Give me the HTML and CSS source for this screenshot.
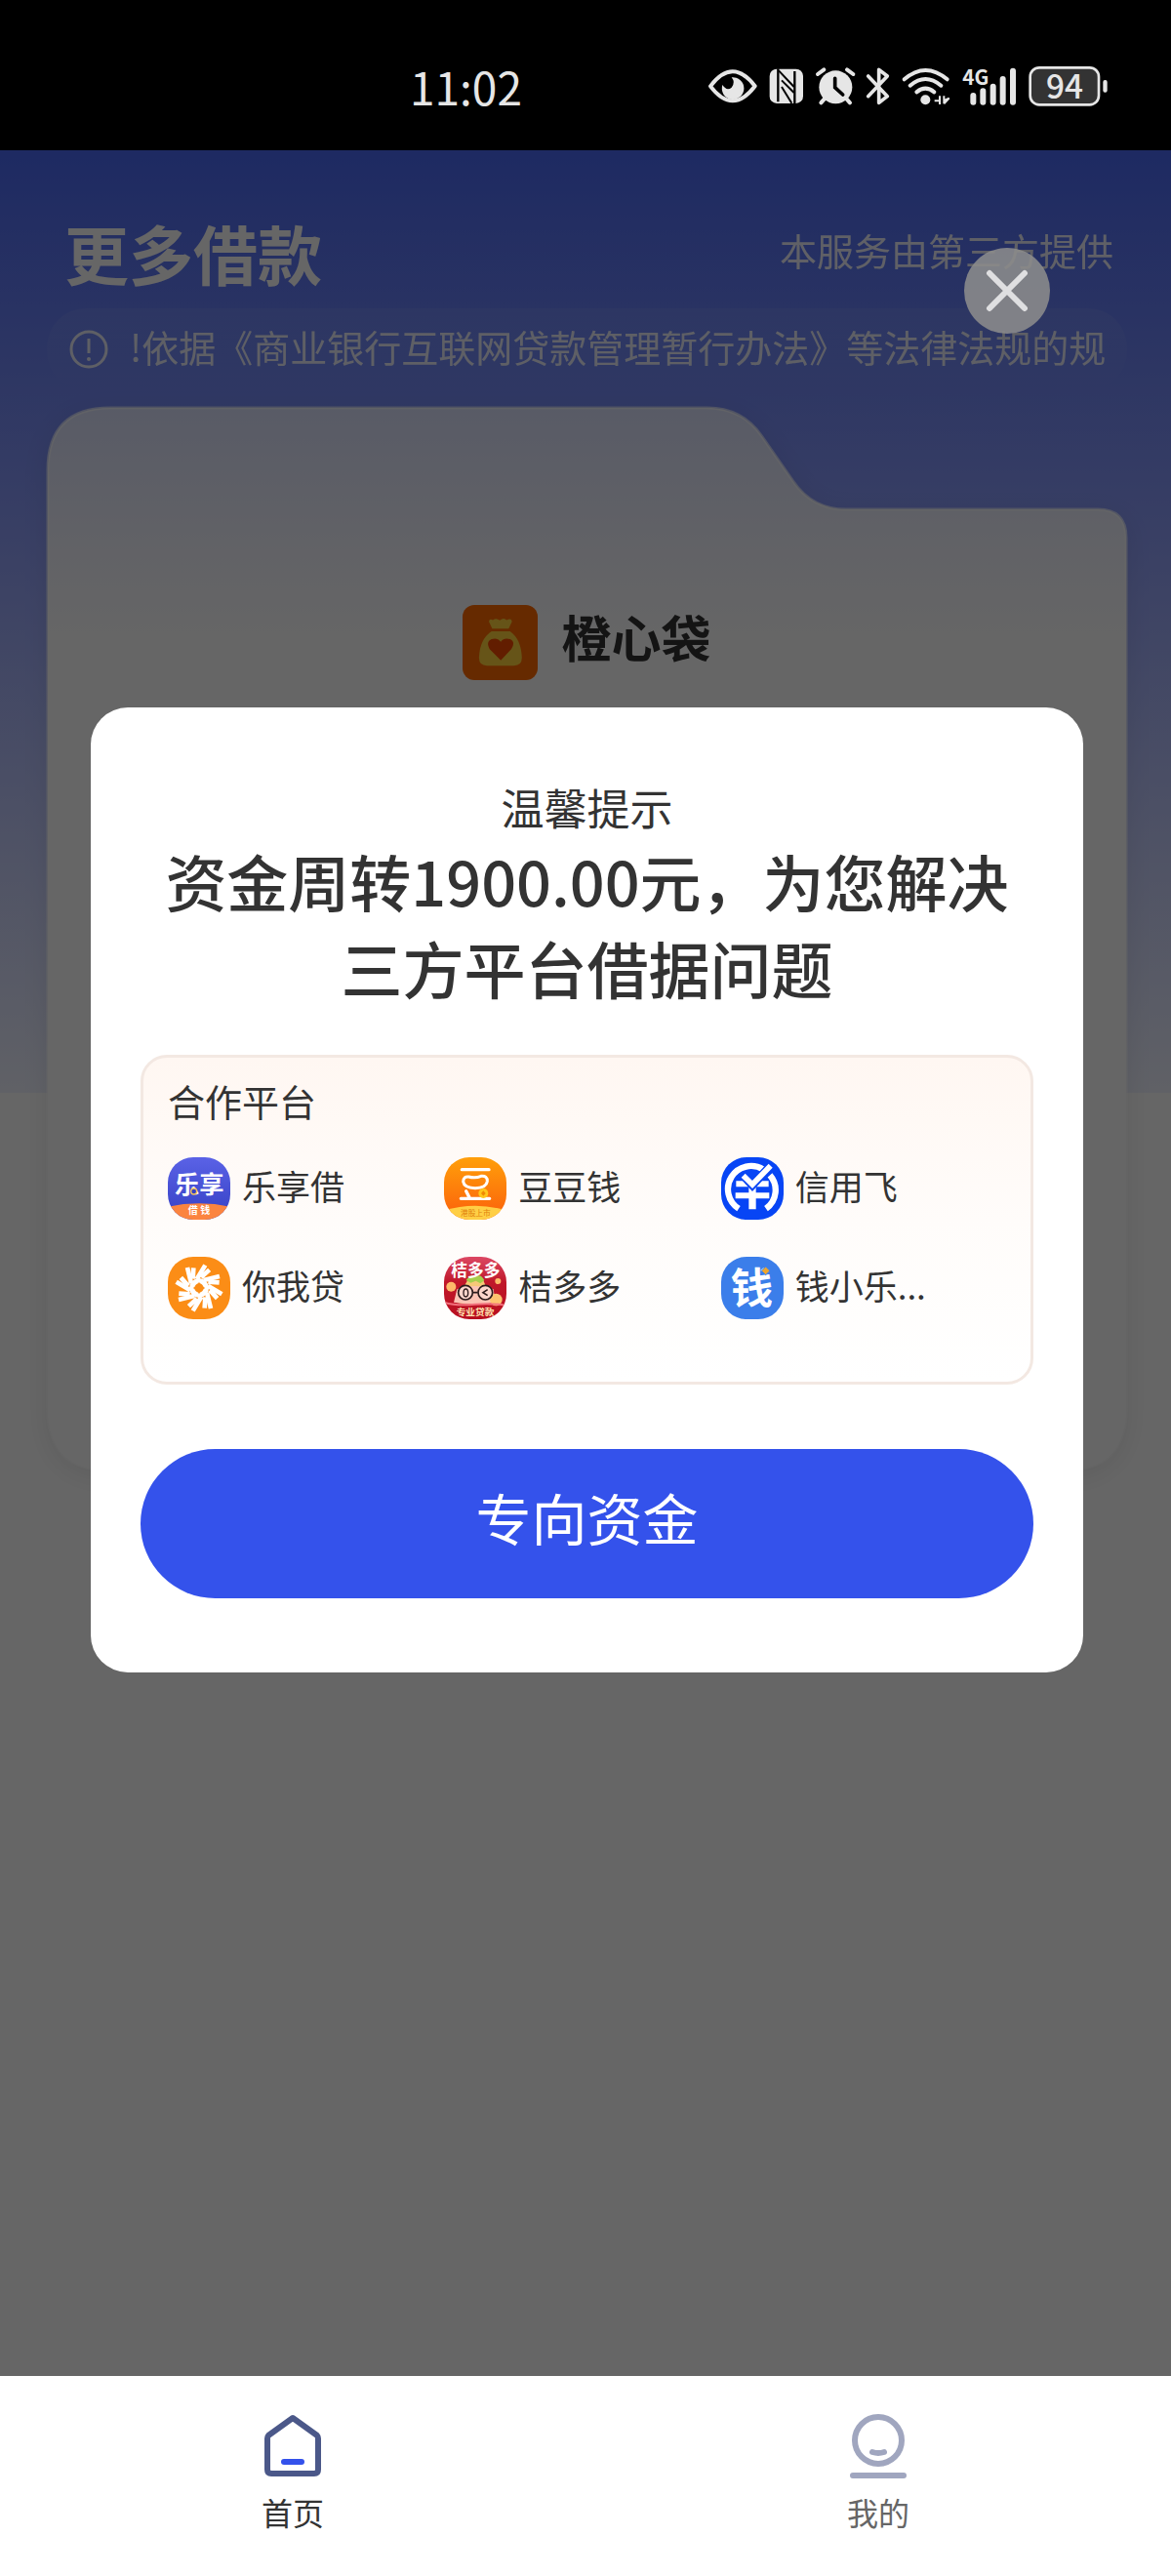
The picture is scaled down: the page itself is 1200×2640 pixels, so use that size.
FILE: index.html
```html
<!DOCTYPE html>
<html lang="zh-CN">
<head>
    <meta charset="UTF-8">
    <meta name="viewport" content="width=device-width, initial-scale=1.0">
    <title>更多借款</title>
    <link rel="stylesheet" href="styles.css">
</head>
<body>

    <!-- Status bar -->
    <div class="status-bar">
        <span class="time">11:02</span>
        <div class="status-icons">
            <svg width="50" height="42" viewBox="74 80 150 126">
                <path d="M80 144 Q148 54 217 144 Q148 234 80 144Z" fill="none" stroke="#e6e6e6" stroke-width="12" stroke-linejoin="round"/>
                <path d="M145 117 A34 34 0 1 1 117 140 Q130 160 145 148 Q158 132 145 117Z" fill="#e6e6e6"/>
            </svg>
            <svg width="36" height="42" viewBox="260 80 108 126">
                <rect x="262" y="91" width="103" height="106" rx="22" fill="#e6e6e6"/>
                <path d="M288 90 V192 M339 98 V198" stroke="#000" stroke-width="7"/>
                <path d="M290 96 L337 146 M299 126 L337 164 M299 146 L330 196" stroke="#000" stroke-width="6"/>
            </svg>
            <svg width="40" height="42" viewBox="403 80 120 126">
                <circle cx="464" cy="147" r="51" fill="#e6e6e6"/>
                <path d="M409 107 L428 93 M518 107 L499 93 M432 180 L419 195 M495 180 L508 195" stroke="#e6e6e6" stroke-width="12" stroke-linecap="round"/>
                <path d="M462 120 V148 L486 170" fill="none" stroke="#000" stroke-width="11" stroke-linecap="round"/>
            </svg>
            <svg width="24" height="42" viewBox="563 80 72 126">
                <path d="M568 113 L627 175 L601 195 V93 L627 113 L568 175" fill="none" stroke="#e6e6e6" stroke-width="11" stroke-linecap="round" stroke-linejoin="round"/>
            </svg>
            <svg width="50" height="42" viewBox="672 80 150 126">
                <path d="M680 123 Q745 67 812 123 M698 142 Q745 102 793 142 M718 162 Q745 140 772 162" fill="none" stroke="#e6e6e6" stroke-width="12" stroke-linecap="round"/>
                <circle cx="745" cy="186" r="15" fill="#e6e6e6"/>
                <path d="M773 189 H789 V174 M789 174 V200 M802 174 V198 M802 188 L818 181 L802 198" fill="none" stroke="#e6e6e6" stroke-width="6"/>
            </svg>
            <svg width="56" height="42" viewBox="856 80 168 126">
                <path d="M890 173 V193 M920 159 V193 M951 145 V193 M981 122 V193 M1012 97 V193" stroke="#e6e6e6" stroke-width="18" stroke-linecap="round"/>
                <text class="svg-text" x="857" y="140" font-size="62" font-weight="700" fill="#e6e6e6">4G</text>
            </svg>
            <svg width="82" height="42" viewBox="1060 80 246 126">
                <rect x="1065" y="87" width="211" height="114" rx="28" fill="#333" stroke="#e6e6e6" stroke-width="8"/>
                <rect x="1289" y="125" width="13" height="38" rx="6" fill="#e6e6e6"/>
                <text class="svg-text" x="1171" y="181" font-size="100" font-weight="500" text-anchor="middle" fill="#e6e6e6">94</text>
            </svg>
        </div>
    </div>

    <div class="screen">
        <main class="page">
            <header class="page-header">
                <h1>更多借款</h1>
                <p>本服务由第三方提供</p>
            </header>

            <div class="notice">
                <svg width="40" height="40" viewBox="0 0 40 40">
                    <circle cx="20" cy="20" r="18" fill="none" stroke="#fff" stroke-width="3"/>
                    <path d="M20 9 V24" stroke="#fff" stroke-width="3"/>
                    <circle cx="20" cy="30" r="2" fill="#fff"/>
                </svg>
                <p>!依据《商业银行互联网贷款管理暂行办法》等法律法规的规</p>
            </div>

            <section class="card">
                <svg class="card-shape" viewBox="0 0 1106 1090" preserveAspectRatio="none">
                    <defs>
                        <linearGradient id="cardFill" x1="0" y1="0" x2="0" y2="1">
                            <stop offset="0" stop-color="#dde3ff"/>
                            <stop offset="0.14" stop-color="#f5f6ff"/>
                            <stop offset="0.22" stop-color="#fff"/>
                        </linearGradient>
                    </defs>
                    <path d="M1 65 Q1 1 65 1 H676 C700 1 719 11 732 30 L764 76 C777 95 796 105 818 105 H1076 Q1105 105 1105 134 V1025 Q1105 1089 1041 1089 H65 Q1 1089 1 1025 Z" fill="url(#cardFill)" stroke="#fff" stroke-opacity="0.6" stroke-width="3"/>
                </svg>
                <div class="brand">
                    <svg width="77" height="77" viewBox="0 0 228 228">
                        <rect width="228" height="228" rx="36" fill="#ff6a00"/>
                        <path d="M80 50 Q82 40 92 46 Q102 38 113 47 Q125 36 134 46 Q148 38 150 50 L140 72 H90 Z" fill="#ffd23c"/>
                        <path d="M88 80 H144 Q178 104 180 160 Q180 184 156 184 H74 Q50 184 50 160 Q52 104 88 80Z" fill="#ffd23c"/>
                        <path d="M116 168 L82 134 Q70 112 88 104 Q106 98 116 112 Q126 98 144 104 Q162 112 148 134Z" fill="#f54a00"/>
                    </svg>
                    <h2>橙心袋</h2>
                </div>
            </section>
        </main>

        <div class="overlay">
            <button class="close-btn" type="button" aria-label="关闭">
                <svg width="88" height="88" viewBox="0 0 88 88">
                    <path d="M26 26 L62 62 M62 26 L26 62" stroke="#fff" stroke-opacity="0.75" stroke-width="6" stroke-linecap="round"/>
                </svg>
            </button>

            <div class="modal" role="dialog" aria-labelledby="modal-title">
                <p class="tip">温馨提示</p>
                <h2 class="modal-title" id="modal-title">资金周转1900.00元，为您解决三方平台借据问题</h2>

                <div class="partners">
                    <h3>合作平台</h3>
                    <ul class="partner-list">
                        <li>
                            <svg class="logo" viewBox="0 0 192 192">
                                <defs>
                                    <linearGradient id="lexiang" x1="0" y1="0" x2="0" y2="1">
                                        <stop offset="0" stop-color="#5a62e6"/>
                                        <stop offset="1" stop-color="#3540c4"/>
                                    </linearGradient>
                                </defs>
                                <rect width="192" height="192" fill="url(#lexiang)"/>
                                <path d="M0 152 Q96 132 192 152 V192 H0Z" fill="#fb8440"/>
                                <text class="svg-text" x="97" y="110" font-size="76" font-weight="700" text-anchor="middle" fill="#fff">乐享</text>
                                <circle cx="80" cy="105" r="9" fill="#3540c4" stroke="#f3c35c" stroke-width="4"/>
                                <text class="svg-text" x="96" y="175" font-size="30" font-weight="700" text-anchor="middle" fill="#fff">借 钱</text>
                            </svg>
                            <span>乐享借</span>
                        </li>
                        <li>
                            <svg class="logo" viewBox="0 0 192 192">
                                <defs>
                                    <linearGradient id="doudou" x1="0" y1="0" x2="0" y2="1">
                                        <stop offset="0" stop-color="#ff9f0a"/>
                                        <stop offset="1" stop-color="#fb5f0c"/>
                                    </linearGradient>
                                </defs>
                                <rect width="192" height="192" fill="url(#doudou)"/>
                                <path d="M0 164 Q96 134 192 164 V192 H0Z" fill="#ffcf45"/>
                                <path d="M55 38 H138 M52 127 H140 M68 104 L78 124" stroke="#fff" stroke-width="10" stroke-linecap="round"/>
                                <path d="M76 60 Q96 66 114 58 Q134 56 133 74 Q130 94 96 95 Q62 94 59 75 Q60 58 76 60Z" fill="none" stroke="#fff" stroke-width="9"/>
                                <circle cx="121" cy="111" r="15" fill="#ffc61a"/>
                                <path d="M121 103 L128 111 L121 119 L114 111Z" fill="#f08a00"/>
                                <text class="svg-text" x="97" y="179" font-size="23" text-anchor="middle" fill="#e0800c">港股上市</text>
                            </svg>
                            <span>豆豆钱</span>
                        </li>
                        <li>
                            <svg class="logo" viewBox="0 0 192 192">
                                <rect width="192" height="192" fill="#0745f5"/>
                                <path d="M54 158 A70 70 0 0 1 130 38 M150 55 A70 70 0 0 1 138 158" fill="none" stroke="#fff" stroke-width="19"/>
                                <path d="M46 82 H146 M44 118 H148" stroke="#fff" stroke-width="18"/>
                                <path d="M96 90 V160" stroke="#fff" stroke-width="22"/>
                                <path d="M64 52 L96 86 L152 26" fill="none" stroke="#0745f5" stroke-width="26"/>
                                <path d="M68 56 L96 84 L152 26" fill="none" stroke="#fff" stroke-width="17"/>
                            </svg>
                            <span>信用飞</span>
                        </li>
                        <li>
                            <svg class="logo" viewBox="0 0 192 192">
                                <defs>
                                    <path id="blade" d="M-7 -27 L19 -70 M-19 -28 L-17 -62" fill="none" stroke="#fff" stroke-width="14"/>
                                </defs>
                                <rect width="192" height="192" fill="#fb8d16"/>
                                <g transform="translate(96 96)">
                                    <use href="#blade"/>
                                    <use href="#blade" transform="rotate(45)"/>
                                    <use href="#blade" transform="rotate(90)"/>
                                    <use href="#blade" transform="rotate(135)"/>
                                    <use href="#blade" transform="rotate(180)"/>
                                    <use href="#blade" transform="rotate(225)"/>
                                    <use href="#blade" transform="rotate(270)"/>
                                    <use href="#blade" transform="rotate(315)"/>
                                    <circle r="22" fill="none" stroke="#fff" stroke-width="16"/>
                                    <path d="M0 -19 L6 -7 L19 0 L6 7 L0 19 L-6 7 L-19 0 L-6 -7Z" fill="#fb8d16"/>
                                </g>
                            </svg>
                            <span>你我贷</span>
                        </li>
                        <li>
                            <svg class="logo" viewBox="0 0 192 192">
                                <defs>
                                    <linearGradient id="jududuo" x1="0" y1="0" x2="0" y2="1">
                                        <stop offset="0" stop-color="#dc4864"/>
                                        <stop offset="0.4" stop-color="#c0182a"/>
                                        <stop offset="1" stop-color="#b80f20"/>
                                    </linearGradient>
                                </defs>
                                <rect width="192" height="192" fill="url(#jududuo)"/>
                                <circle cx="22" cy="92" r="15" fill="#fdbb6a"/>
                                <circle cx="166" cy="75" r="9" fill="#fdbb6a"/>
                                <path d="M76 66 H118 L150 140 Q96 152 34 140 Z" fill="#f6c878"/>
                                <path d="M40 100 Q96 80 152 100 L158 140 Q96 150 30 140Z" fill="#fbc3b4"/>
                                <circle cx="160" cy="132" r="19" fill="#fdc470"/>
                                <path d="M0 140 Q40 152 96 146 Q150 142 192 150" fill="none" stroke="#f2707c" stroke-width="6"/>
                                <path d="M68 72 Q82 50 98 62 Q112 50 124 72 L112 82 L98 74 L82 80Z" fill="#a6cf4e"/>
                                <circle cx="66" cy="110" r="22" fill="#fbd6cc" stroke="#2c1c1c" stroke-width="5"/>
                                <circle cx="127" cy="110" r="22" fill="#fbd6cc" stroke="#2c1c1c" stroke-width="5"/>
                                <path d="M89 110 H104 M134 101 L120 110 L134 119" fill="none" stroke="#2c1c1c" stroke-width="5"/>
                                <ellipse cx="67" cy="111" rx="7" ry="12" fill="none" stroke="#2c1c1c" stroke-width="4"/>
                                <text class="svg-text" x="97" y="60" font-size="50" font-weight="700" text-anchor="middle" fill="#fff">桔多多</text>
                                <text class="svg-text" x="96" y="180" font-size="29" font-weight="700" text-anchor="middle" fill="#ffe3b0">专业贷款</text>
                            </svg>
                            <span>桔多多</span>
                        </li>
                        <li>
                            <svg class="logo" viewBox="0 0 192 192">
                                <rect width="192" height="192" fill="#3b7eea"/>
                                <text class="svg-text" x="94" y="144" font-size="130" font-weight="700" text-anchor="middle" fill="#fff">钱</text>
                                <path d="M137 30 L150 43 L137 56 L124 43Z" fill="#eea62e" stroke="#3b7eea" stroke-width="3"/>
                            </svg>
                            <span>钱小乐...</span>
                        </li>
                    </ul>
                </div>

                <button class="submit-btn" type="button">专向资金</button>
            </div>
        </div>
    </div>

    <!-- Bottom tabs -->
    <nav class="tab-bar">
        <a class="tab active" href="#home">
            <svg width="60" height="66" viewBox="0 0 60 66">
                <path d="M30 4 L55 22 Q56 23 56 25 V57 Q56 61 52 61 H8 Q4 61 4 57 V25 Q4 23 5 22 Z" fill="none" stroke="#4b5889" stroke-width="6" stroke-linejoin="round"/>
                <path d="M21 49 H39" stroke="#3452eb" stroke-width="6" stroke-linecap="round"/>
            </svg>
            <span>首页</span>
        </a>
        <a class="tab" href="#mine">
            <svg width="60" height="66" viewBox="0 0 60 66">
                <circle cx="30" cy="27" r="24" fill="none" stroke="#a0a6bf" stroke-width="6"/>
                <path d="M24 39 Q30 41 36 39 M4 63 H56" fill="none" stroke="#a0a6bf" stroke-width="6" stroke-linecap="round"/>
            </svg>
            <span>我的</span>
        </a>
    </nav>

</body>
</html>
```

FILE: styles.css
```css
* {
    margin: 0;
    padding: 0;
    box-sizing: border-box;
}

body {
    display: flex;
    flex-direction: column;
    min-height: 100vh;
    background: #fff;
    color: #333;
    font-family: "Noto Sans CJK SC", "Noto Sans", sans-serif;
}

svg {
    display: block;
    flex-shrink: 0;
    overflow: visible;
}

.svg-text {
    font-family: "Noto Sans CJK SC", sans-serif;
}

/* Status bar */
.status-bar {
    display: flex;
    justify-content: space-between;
    align-items: center;
    height: 154px;
    padding: 22px 64px 0 35%;
    background: #000;
    color: #e6e6e6;
}

.time {
    font-size: 46px;
    line-height: 64px;
}

.status-icons {
    display: flex;
    align-items: center;
    gap: 12px;
}

/* Page under the overlay */
.screen {
    position: relative;
    flex: 1;
}

.page {
    padding: 64px 45px 70px 48px;
    background: linear-gradient(#4b69f5, #8f9ffa 396px, #f0f3ff 966px) no-repeat;
    background-size: 100% 966px;
}

.page-header {
    display: flex;
    justify-content: space-between;
    align-items: center;
    padding: 0 14px 0 18px;
    color: #fff;
}

.page-header h1 {
    font-size: 66px;
    line-height: 80px;
}

.page-header p {
    padding-bottom: 4px;
    font-size: 38px;
    line-height: 48px;
    opacity: 0.9;
}

.notice {
    display: flex;
    align-items: center;
    gap: 22px;
    height: 84px;
    margin-top: 18px;
    padding: 0 12px 0 23px;
    border-radius: 40px;
    background: linear-gradient(rgba(255, 255, 255, 0.07), rgba(255, 255, 255, 0));
    color: #fff;
}

.notice svg,
.notice p {
    opacity: 0.85;
}

.notice p {
    padding-bottom: 6px;
    font-size: 38px;
    line-height: 48px;
    white-space: nowrap;
}

/* Folder shaped card, the shape sits behind the content */
.card {
    display: grid;
    height: 1090px;
    margin-top: 17px;
}

.card-shape,
.brand {
    grid-area: 1 / 1;
}

.card-shape {
    width: 100%;
    height: 100%;
    filter: drop-shadow(0 6px 12px rgba(0, 0, 0, 0.08));
}

.brand {
    display: flex;
    justify-content: center;
    align-items: center;
    align-self: start;
    gap: 24px;
    padding-top: 203px;
    z-index: 1;
}

.brand h2 {
    padding-bottom: 14px;
    font-size: 51px;
    line-height: 60px;
}

/* Overlay and dialog */
.overlay {
    position: absolute;
    inset: 0;
    z-index: 2;
    display: flex;
    flex-direction: column;
    align-items: center;
    padding: 100px 90px 0 93px;
    background: rgba(0, 0, 0, 0.6);
}

.close-btn {
    align-self: flex-end;
    width: 88px;
    height: 88px;
    margin-right: 34px;
    border: none;
    border-radius: 50%;
    background: rgba(140, 140, 140, 0.88);
    cursor: pointer;
}

.modal {
    width: 100%;
    margin-top: 383px;
    padding: 72px 51px 76px;
    border-radius: 38px;
    background: #fff;
    text-align: center;
}

.tip {
    font-size: 44px;
    line-height: 60px;
}

.modal-title {
    font-size: 63px;
    font-weight: 500;
    line-height: 89px;
}

.partners {
    margin-top: 46px;
    padding: 20px 34px 64px 25px;
    border: 3px solid #f3e8e2;
    border-radius: 27px;
    background: linear-gradient(#fff7f2, #fffcfa 50%, #fff);
    text-align: left;
}

.partners h3 {
    font-size: 38px;
    font-weight: 400;
    line-height: 48px;
}

.partner-list {
    display: grid;
    grid-template-columns: repeat(3, 1fr);
    row-gap: 38px;
    margin-top: 34px;
    list-style: none;
}

.partner-list li {
    display: flex;
    align-items: center;
    gap: 12px;
    font-size: 35px;
    line-height: 48px;
}

.partner-list span {
    padding-bottom: 6px;
}

.logo {
    width: 64px;
    height: 64px;
    border-radius: 26px;
    overflow: hidden;
}

.submit-btn {
    width: 100%;
    height: 153px;
    margin-top: 66px;
    padding-bottom: 16px;
    border: none;
    border-radius: 77px;
    background: #3452eb;
    color: #fff;
    font-family: inherit;
    font-size: 57px;
    cursor: pointer;
}

/* Bottom tabs */
.tab-bar {
    display: flex;
    height: 205px;
    background: #fff;
}

.tab {
    display: flex;
    flex: 1;
    flex-direction: column;
    align-items: center;
    gap: 10px;
    padding-top: 39px;
    color: #666;
    font-size: 32px;
    line-height: 48px;
    text-decoration: none;
}

.tab.active {
    color: #333;
}
```
